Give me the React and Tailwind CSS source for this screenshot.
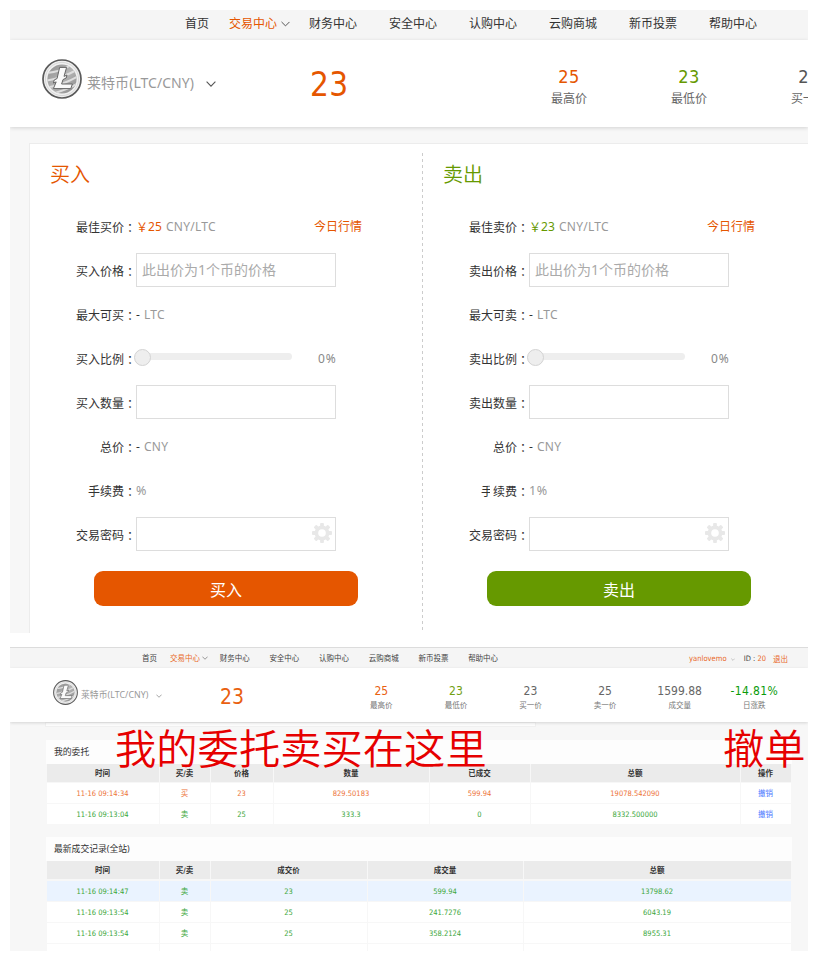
import React from "react";

const SANS = "font-['Noto_Sans','Noto_Sans_CJK_SC',sans-serif]";
const TAHOMA = "font-['DejaVu_Sans_Condensed','Noto_Sans','Noto_Sans_CJK_SC',sans-serif]";

const navItems = ["财务中心", "安全中心", "认购中心", "云购商城", "新币投票", "帮助中心"];

function Chevron({ className }) {
  return (
    <svg viewBox="0 0 10 6" className={className} fill="none" stroke="currentColor" strokeWidth="1.1">
      <path d="M0.6 0.7 L5 5.1 L9.4 0.7" />
    </svg>
  );
}

function Coin({ className }) {
  return (
    <svg viewBox="0 0 40 40" className={className}>
      <defs>
        <linearGradient id="coinFace" x1="0" y1="0" x2="1" y2="1">
          <stop offset="0" stopColor="#8d8d8d" />
          <stop offset="0.5" stopColor="#b5b5b5" />
          <stop offset="1" stopColor="#8a8a8a" />
        </linearGradient>
        <clipPath id="coinClip">
          <circle cx="20" cy="20" r="14.6" />
        </clipPath>
      </defs>
      <circle cx="20" cy="20" r="19" fill="#f0f0f0" stroke="#5a5a5a" strokeWidth="1.7" />
      <circle cx="20" cy="20" r="16.6" fill="none" stroke="#d8d8d8" strokeWidth="1" />
      <circle cx="20" cy="20" r="14.6" fill="url(#coinFace)" />
      <g clipPath="url(#coinClip)" stroke="#dedede" strokeWidth="2" fill="none">
        <path d="M2 14 Q18 14 34 3" />
        <path d="M2 22 Q20 20 38 9" />
        <path d="M2 29 Q22 26 38 16" />
        <path d="M4 36 Q24 32 38 23" />
      </g>
      <path
        d="M17.6 8.4 L24.6 8.4 L22 17.4 L25 16 L24.2 19 L21 20.6 L19.6 25 L30.4 25 L28.8 29.6 L11.4 29.6 L14.2 22.9 L11.4 24.1 L12.2 21 L15.1 19.5 Z"
        fill="#fafafa"
        stroke="#666"
        strokeWidth="1"
      />
    </svg>
  );
}

function Gear() {
  return (
    <svg viewBox="0 0 20 20" className="h-5 w-5">
      <g fill="#e8e8e8">
        {[0, 45, 90, 135].map((a) => (
          <rect key={a} x="8.1" y="0" width="3.8" height="20" rx="0.9" transform={`rotate(${a} 10 10)`} />
        ))}
        <circle cx="10" cy="10" r="7.4" />
      </g>
      <circle cx="10" cy="10" r="3.8" fill="#fff" />
    </svg>
  );
}

function Row({ label, children }) {
  return (
    <div className="flex h-11 items-center">
      <div className="w-[106px] shrink-0 pt-[2px] text-right text-[#333]">
        {label}
        <span className="inline-block translate-y-px font-['Noto_Sans_CJK_JP',sans-serif]">：</span>
      </div>
      {children}
    </div>
  );
}

function Unit({ children }) {
  return (
    <>
      <span className="pt-[2px] text-[#333]">-</span>
      <span className="ml-1 pt-[2px] tracking-[0.3px]">{children}</span>
    </>
  );
}

const inputClass = "h-[34px] w-[200px] border border-[#ddd] bg-white px-[5px] flex items-center";

function TradeForm({ side, price, tone, button, fee, worn }) {
  const action = side;
  const short = side[0];
  return (
    <div className="w-[393px] shrink-0">
      <h2 className={`h-[60px] pt-4 pl-5 text-[20px] leading-[30px] font-[350] ${tone}`}>{action}</h2>
      <div className="text-[12px] leading-[18px] text-[#999]">
        <Row label={`最佳${short}价`}>
          <span className={`pt-[2px] font-['Noto_Sans_CJK_JP'] ${tone}`}>￥</span>
          <span className={`w-[14px] pt-[2px] ${tone}`}>{price}</span>
          <span className="ml-1 w-[148px] pt-[2px] tracking-[0.25px]">CNY/LTC</span>
          <a className="pt-[2px] text-[#e55600]">今日行情</a>
        </Row>
        <Row label={`${action}价格`}>
          <div className={`${inputClass} text-[14px] text-[#aaa]`}>此出价为1个币的价格</div>
        </Row>
        <Row label={`最大可${short}`}>
          <Unit>LTC</Unit>
        </Row>
        <Row label={`${action}比例`}>
          <div className="-mt-[2px] -ml-[2px] flex w-[158px] items-center">
            <div className="z-10 h-[17px] w-[17px] rounded-full border border-[#d3d3d3] bg-[#eee]" />
            <div className="-mt-px -ml-2 h-[7px] flex-1 rounded bg-[#eee]" />
          </div>
          <span className="ml-[26px] pt-[2px] tracking-[0.8px] text-[#888]">0%</span>
        </Row>
        <Row label={`${action}数量`}>
          <div className={inputClass} />
        </Row>
        <Row label="总价">
          <Unit>CNY</Unit>
        </Row>
        <div className="relative">
          <Row label="手续费">
            <span className="pt-[2px] text-[12.5px] tracking-[0.5px]">{fee}</span>
          </Row>
          {worn && (
            <>
              <div className="absolute top-[15px] left-[57px] h-[3px] w-[40px] bg-white/80" />
              <div className="absolute top-[15px] left-[67px] h-[15px] w-[3px] bg-white" />
            </>
          )}
        </div>
        <Row label="交易密码">
          <div className={`${inputClass} justify-end !pr-[3px] !pb-[2px]`}>
            <Gear />
          </div>
        </Row>
      </div>
      <button className={`mt-[15px] ml-[64px] block h-[35px] w-[264px] rounded-[9px] pt-[3px] text-[16px] leading-[32px] text-white ${button}`}>
        {action}
      </button>
    </div>
  );
}

function TradePage() {
  return (
    <section className="h-[623px] w-[798px] overflow-hidden bg-[#f7f7f7]">
      <nav className="flex h-[30px] items-center bg-[#f5f5f5] pl-[175px] pb-[3px] text-[12px] text-[#333]">
        <span className="w-11 shrink-0">首页</span>
        <span className="flex w-20 shrink-0 items-center text-[#e55600]">
          交易中心
          <Chevron className="mt-[1px] ml-1 h-[6px] w-[9px] text-[#555]" />
        </span>
        {navItems.map((t) => (
          <span key={t} className="w-20 shrink-0">{t}</span>
        ))}
      </nav>
      <header className="relative flex h-[87px] bg-white shadow-[0_1px_4px_rgba(0,0,0,0.15)]">
        <Coin className="mt-[19px] ml-8 h-10 w-10 shrink-0" />
        <span className="mt-[33px] ml-[5px] w-[108px] shrink-0 text-[14px] leading-5 tracking-[0.05px] whitespace-nowrap text-[#999]">莱特币(LTC/CNY)</span>
        <Chevron className="mt-[41px] ml-[11px] h-[6px] w-[10px] shrink-0 text-[#555]" />
        <span className={`mt-[24px] ml-[94px] w-[199px] shrink-0 text-[33px] leading-[42px] tracking-[0.4px] text-[#e55600] ${TAHOMA}`}>23</span>
        {[["25", "最高价", "text-[#e55600]"], ["23", "最低价", "text-[#690]"], ["23", "买一价", "text-[#555]"]].map(([n, l, c]) => (
          <div key={l} className="w-[120px] shrink-0 pt-[26px] text-center">
            <div className={`text-[18px] leading-[22px] tracking-[0.4px] ${TAHOMA} ${c}`}>{n}</div>
            <div className="mt-[2px] text-[12px] leading-[18px] text-[#666]">{l}</div>
          </div>
        ))}
      </header>
      <div className="mt-4 ml-[19px] flex h-[500px] w-[800px] border-t border-l border-[#ececec] bg-white">
        <TradeForm side="买入" price="25" tone="text-[#e55600]" button="bg-[#e55600]" fee="%" />
        <svg className="mt-[9px] -ml-px h-[477px] w-px shrink-0" viewBox="0 0 1 477">
          <path d="M0.5 0V477" stroke="#ccc" strokeDasharray="3 3" />
        </svg>
        <TradeForm side="卖出" price="23" tone="text-[#690]" button="bg-[#690]" fee="1%" worn />
      </div>
    </section>
  );
}

const RED = "text-[#ed7238]";
const GREEN = "text-[#3aa63a]";

const orderCols = "grid-cols-[112px_50px_62px_155px_100px_209px_50px]";
const dealCols = "grid-cols-[112px_50px_156px_155px_267px]";

function TableRow({ cols, cells, cell, linkLast }) {
  return (
    <div className={`grid gap-px ${cols}`}>
      {cells.map((c, i) => (
        <div key={i} className={`flex items-center justify-center pt-[2px] pr-px ${cell} ${linkLast && i === cells.length - 1 ? "!text-[#4c78ff]" : ""}`}>
          {c}
        </div>
      ))}
    </div>
  );
}

const headCell = "h-[18px] bg-[#ebebeb] font-bold text-[#333]";

function OrdersPage() {
  return (
    <section className="relative mt-[14px] h-[304px] w-[798px] overflow-hidden border-t border-[#dcdcdc] bg-[#f7f7f7] text-[7.5px] leading-[12px]">
      <nav className="flex h-5 items-center bg-[#f5f5f5] pl-[132px] text-[#444]">
        <span className="w-[28px] shrink-0">首页</span>
        <span className="flex w-[49.7px] shrink-0 items-center text-[#e9692a]">
          交易中心
          <Chevron className="ml-[2px] h-1 w-[6px] text-[#666]" />
        </span>
        {navItems.map((t) => (
          <span key={t} className="w-[49.7px] shrink-0">{t}</span>
        ))}
        <span className="ml-auto flex items-center pt-[2px] pr-5 text-[#e9692a]">
          <span className={`text-[7.6px] ${TAHOMA}`}>yanlovemo</span>
          <Chevron className="ml-1 h-[3px] w-1 text-[#888]" />
          <span className={`ml-[9px] ${TAHOMA}`}><span className="text-[#444]">ID : </span>20</span>
          <span className="ml-[7px]">退出</span>
        </span>
      </nav>
      <header className="relative flex h-[54px] bg-white shadow-[0_1px_3px_rgba(0,0,0,0.14)]">
        <Coin className="mt-[12px] ml-[43px] h-[25px] w-[25px] shrink-0" />
        <span className="mt-[21px] ml-[3px] w-[67px] shrink-0 text-[8.8px] leading-[12px] tracking-[0.05px] whitespace-nowrap text-[#999]">莱特币(LTC/CNY)</span>
        <Chevron className="mt-[26px] ml-2 h-1 w-[6px] shrink-0 text-[#777]" />
        <span className={`mt-[16px] ml-[58px] w-[124px] shrink-0 text-[21px] leading-[26px] text-[#e9600f] ${TAHOMA}`}>23</span>
        {[
          ["25", "最高价", "text-[#e9600f]"],
          ["23", "最低价", "text-[#71a011]"],
          ["23", "买一价", "text-[#666]"],
          ["25", "卖一价", "text-[#666]"],
          ["1599.88", "成交量", "text-[#666]"],
          ["-14.81%", "日涨跌", "text-[#0a9b0a] tracking-[0.35px]"],
        ].map(([n, l, c]) => (
          <div key={l} className="w-[74.6px] shrink-0 pt-[15px] text-center">
            <div className={`text-[12px] leading-[16px] ${TAHOMA} ${c}`}>{n}</div>
            <div className="text-[7.5px] leading-[12px] text-[#777]">{l}</div>
          </div>
        ))}
      </header>
      <div className="ml-[35px] h-[5px] w-[491px] border border-[#f0f0f0] bg-[#fdfdfd]" />
      <div className="mt-[13px] ml-[36px] w-[746px]">
        <h3 className="h-[24px] bg-[#fdfdfd] pt-[1px] pl-[8px] text-[8.8px] leading-[22px] text-[#333]">我的委托</h3>
        <div className={`pl-px ${TAHOMA}`}>
          <TableRow cols={orderCols} cell={headCell} cells={["时间", "买/卖", "价格", "数量", "已成交", "总额", "操作"]} />
          <div className="mt-px flex flex-col gap-px">
            <TableRow cols={orderCols} linkLast cell={`h-5 bg-white ${RED}`} cells={["11-16 09:14:34", "买", "23", "829.50183", "599.94", "19078.542090", "撤销"]} />
            <TableRow cols={orderCols} linkLast cell={`h-5 bg-white ${GREEN}`} cells={["11-16 09:13:04", "卖", "25", "333.3", "0", "8332.500000", "撤销"]} />
          </div>
        </div>
        <h3 className="mt-[13px] h-[24px] bg-[#fdfdfd] pt-[1px] pl-[8px] text-[8.8px] leading-[22px] text-[#333]">最新成交记录(全站)</h3>
        <div className={`pl-px ${TAHOMA}`}>
          <TableRow cols={dealCols} cell={headCell} cells={["时间", "买/卖", "成交价", "成交量", "总额"]} />
          <div className="mt-[2px] flex flex-col gap-px">
            <TableRow cols={dealCols} cell={`h-5 bg-[#eaf3ff] ${GREEN}`} cells={["11-16 09:14:47", "卖", "23", "599.94", "13798.62"]} />
            <TableRow cols={dealCols} cell={`h-5 bg-white ${GREEN}`} cells={["11-16 09:13:54", "卖", "25", "241.7276", "6043.19"]} />
            <TableRow cols={dealCols} cell={`h-5 bg-white ${GREEN}`} cells={["11-16 09:13:54", "卖", "25", "358.2124", "8955.31"]} />
            <TableRow cols={dealCols} cell="h-5 bg-white" cells={["", "", "", "", ""]} />
          </div>
        </div>
      </div>
      <div className="absolute top-[75px] left-[105px] text-[41.3px] leading-[50px] font-[350] whitespace-nowrap text-[#e60000]">我的委托卖买在这里</div>
      <div className="absolute top-[75px] left-[713px] text-[41.3px] leading-[50px] font-[350] whitespace-nowrap text-[#e60000]">撤单</div>
    </section>
  );
}

export default function App() {
  return (
    <main className={`h-[961px] w-[818px] overflow-hidden bg-white p-[10px] ${SANS}`}>
      <TradePage />
      <OrdersPage />
    </main>
  );
}
